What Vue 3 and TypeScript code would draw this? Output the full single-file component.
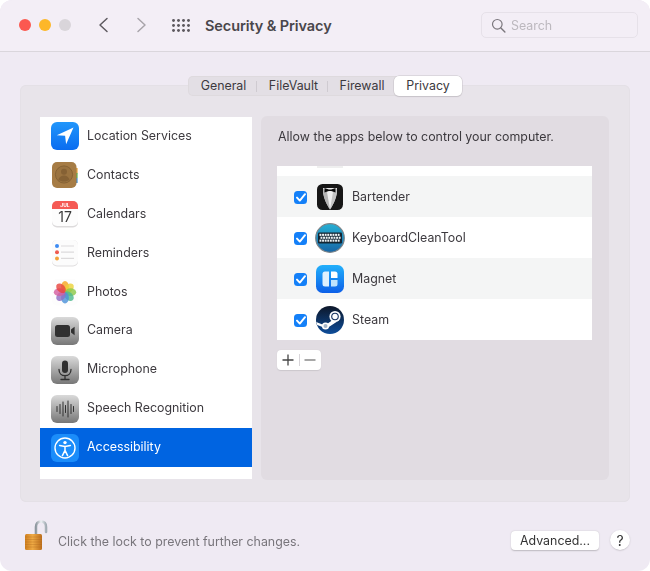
<script setup lang="ts">
interface Service { name: string; icon: string; selected?: boolean }
interface AppRow { name: string; icon: string }

const services: Service[] = [
  { name: 'Location Services', icon: 'location' },
  { name: 'Contacts', icon: 'contacts' },
  { name: 'Calendars', icon: 'calendars' },
  { name: 'Reminders', icon: 'reminders' },
  { name: 'Photos', icon: 'photos' },
  { name: 'Camera', icon: 'camera' },
  { name: 'Microphone', icon: 'microphone' },
  { name: 'Speech Recognition', icon: 'speech' },
  { name: 'Accessibility', icon: 'accessibility', selected: true }
]
const apps: AppRow[] = [
  { name: 'Bartender', icon: 'bartender' },
  { name: 'KeyboardCleanTool', icon: 'keyboard' },
  { name: 'Magnet', icon: 'magnet' },
  { name: 'Steam', icon: 'steam' }
]
const tabs = [
  { name: 'General', w: 69 },
  { name: 'FileVault', w: 71 },
  { name: 'Firewall', w: 66 },
  { name: 'Privacy', w: 68, active: true }
]
const petals = [
  { a: 0, c: '#f6a623' }, { a: 45, c: '#ecd23a' }, { a: 90, c: '#8cc84b' }, { a: 135, c: '#4fb98f' },
  { a: 180, c: '#4d93d9' }, { a: 225, c: '#8f6fc4' }, { a: 270, c: '#d45fa0' }, { a: 315, c: '#e8453f' }
]
const bars = [
  [6, 2.5], [9, 4.5], [12, 7], [14.5, 3.5], [17, 8], [20, 4.5], [22.5, 2.5]
]
const keyCols = [0, 1, 2, 3, 4, 5, 6, 7]
const keyRows = [0, 1, 2]
</script>

<template>
  <div class="window">
    <header class="titlebar">
      <div class="lights">
        <span class="light red"></span>
        <span class="light yellow"></span>
        <span class="light gray"></span>
      </div>
      <svg class="chev back" width="12" height="18" viewBox="0 0 12 18"><path d="M10 2.500 3 9l7 6.500" fill="none" stroke="#5e5a60" stroke-width="1.500" stroke-linecap="round" stroke-linejoin="round"/></svg>
      <svg class="chev forward" width="12" height="18" viewBox="0 0 12 18"><path d="M3 2.500 10 9l-7 6.500" fill="none" stroke="#a8a4aa" stroke-width="1.500" stroke-linecap="round" stroke-linejoin="round"/></svg>
      <svg class="grid-icon" width="18" height="13" viewBox="0 0 18 13">
        <g fill="#5c585e">
          <template v-for="y in [1.5, 6.5, 11.5]" :key="y">
            <circle v-for="x in [1.5, 6.5, 11.5, 16.5]" :key="x" :cx="x" :cy="y" r="1.45"/>
          </template>
        </g>
      </svg>
      <h1 class="title">Security &amp; Privacy</h1>
      <div class="search">
        <svg width="15" height="15" viewBox="0 0 15 15"><circle cx="6.300" cy="6.300" r="4.800" fill="none" stroke="#7b777d" stroke-width="1.200"/><path d="m9.900 9.900 4 4" stroke="#7b777d" stroke-width="1.400" stroke-linecap="round"/></svg>
        <span>Search</span>
      </div>
    </header>

    <main class="content">
      <nav class="tabs">
        <div v-for="(t, i) in tabs" :key="t.name" class="tab" :class="{ active: t.active, sep: i < 2 }" :style="{ width: t.w + 'px' }">{{ t.name }}</div>
      </nav>
      <section class="panel">
        <ul class="services">
          <li v-for="s in services" :key="s.name" class="service" :class="{ selected: s.selected }">
            <svg class="icon" width="28" height="28" viewBox="0 0 28 28">
              <template v-if="s.icon === 'location'">
                <defs><linearGradient id="loc" x1="0" y1="0" x2="0" y2="1"><stop offset="0" stop-color="#2196fb"/><stop offset="1" stop-color="#0a6cf0"/></linearGradient></defs>
                <rect width="28" height="28" rx="6" fill="url(#loc)"/>
                <path d="M22.500 5.500 5.800 13.200l8.300.6 1 8.400z" fill="#fff"/>
              </template>
              <template v-else-if="s.icon === 'contacts'">
                <rect x="22" y="7" width="4.600" height="5.500" fill="#e8a33c"/><rect x="22" y="12" width="4.600" height="5" fill="#5cb04e"/><rect x="22" y="17" width="4.600" height="5" fill="#3f8dd3"/>
                <rect x="1" y="1" width="24.500" height="26" rx="5" fill="#a67c45"/>
                <circle cx="13" cy="13.500" r="8.600" fill="#9a7340" stroke="#7f5d31" stroke-width=".8"/>
                <circle cx="13" cy="10.800" r="3" fill="#7f5d31" opacity=".8"/>
                <path d="M7.400 18.800c1.200-3.200 3.200-4.200 5.600-4.200s4.400 1 5.600 4.200c-3.200 2.400-8 2.400-11.200 0z" fill="#7f5d31" opacity=".8"/>
              </template>
              <template v-else-if="s.icon === 'calendars'">
                <rect x="1" y="1" width="26" height="26.500" rx="5" fill="#dddbdc"/>
                <path d="M1 9h26v12a5 5 0 0 1-5 5H6a5 5 0 0 1-5-5z" fill="#fdfdfd"/>
                <path d="M1 9V6a5 5 0 0 1 5-5h16a5 5 0 0 1 5 5v3z" fill="#f55a55"/>
                <text x="14" y="7.200" class="cal-m">JUL</text>
                <text x="14" y="22.400" class="cal-d">17</text>
              </template>
              <template v-else-if="s.icon === 'reminders'">
                <rect x="1" y="1" width="26" height="26.500" rx="5" fill="#dfddde"/>
                <rect x="1" y="1" width="26" height="25.500" rx="5" fill="#fcfcfc"/>
                <circle cx="6" cy="7" r="2" fill="#3d8bf2"/><circle cx="6" cy="13.200" r="2" fill="#ef5a50"/><circle cx="6" cy="19.400" r="2" fill="#f2a33a"/>
                <path d="M10 7h13M10 13.200h13M10 19.400h13" stroke="#dcdadb" stroke-width="1.200"/>
              </template>
              <template v-else-if="s.icon === 'photos'">
                <rect x="1" y="1" width="26" height="26.500" rx="5" fill="#fdfdfd"/>
                <ellipse v-for="p in petals" :key="p.a" cx="14" cy="8.600" rx="3.900" ry="5.600" :fill="p.c" opacity=".82" :transform="`rotate(${p.a} 14 14.200)`"/>
              </template>
              <template v-else-if="s.icon === 'camera'">
                <defs><linearGradient id="gr1" x1="0" y1="0" x2="0" y2="1"><stop offset="0" stop-color="#dadada"/><stop offset="1" stop-color="#777"/></linearGradient></defs>
                <rect width="28" height="28" rx="6" fill="url(#gr1)"/>
                <rect x="4" y="8" width="15" height="12" rx="2.500" fill="#303030"/>
                <path d="m20 12.600 3.600-2.800v8.400L20 15.400z" fill="#303030"/>
              </template>
              <template v-else-if="s.icon === 'microphone'">
                <defs><linearGradient id="gr2" x1="0" y1="0" x2="0" y2="1"><stop offset="0" stop-color="#dadada"/><stop offset="1" stop-color="#777"/></linearGradient></defs>
                <rect width="28" height="28" rx="6" fill="url(#gr2)"/>
                <rect x="11" y="4.500" width="6" height="12.500" rx="3" fill="#303030"/>
                <path d="M8 13.500c0 3.800 2.600 6.200 6 6.200s6-2.400 6-6.200M14 19.700v3.600M10 23.500h8" fill="none" stroke="#303030" stroke-width="1.300" stroke-linecap="round"/>
              </template>
              <template v-else-if="s.icon === 'speech'">
                <defs><linearGradient id="gr3" x1="0" y1="0" x2="0" y2="1"><stop offset="0" stop-color="#dadada"/><stop offset="1" stop-color="#777"/></linearGradient></defs>
                <rect width="28" height="28" rx="6" fill="url(#gr3)"/>
                <path v-for="b in bars" :key="b[0]" :d="`M${b[0]} ${14 - b[1]}v${b[1] * 2}`" stroke="#303030" stroke-width="1" stroke-linecap="round"/>
              </template>
              <template v-else>
                <rect width="28" height="28" rx="6" fill="#1b8dfa"/>
                <circle cx="14" cy="14" r="10" fill="none" stroke="#fff" stroke-width="1.400"/>
                <circle cx="14" cy="8.600" r="1.700" fill="#fff"/>
                <path d="M8.600 11.400 14 12.400l5.400-1M14 12.400v4.200M14 16.400l-2.600 5.200M14 16.400l2.600 5.200" fill="none" stroke="#fff" stroke-width="1.500" stroke-linecap="round" stroke-linejoin="round"/>
              </template>
            </svg>
            <span class="service-name">{{ s.name }}</span>
          </li>
        </ul>

        <div class="pane">
          <p class="pane-text">Allow the apps below to control your computer.</p>
          <div class="table">
            <div class="peek"></div>
            <div v-for="a in apps" :key="a.name" class="app">
              <span class="check">
                <svg width="10" height="9" viewBox="0 0 10 9"><path d="M1 4.600 3.800 7.600 9 1.200" fill="none" stroke="#fff" stroke-width="1.900" stroke-linecap="round" stroke-linejoin="round"/></svg>
              </span>
              <svg class="app-icon" width="30" height="30" viewBox="0 0 30 30">
                <template v-if="a.icon === 'bartender'">
                  <rect x="2" y="2" width="26" height="26" rx="5.500" fill="#161616"/>
                  <path d="M8 6h14c.5 8-3 15-7 21.500C11 21 7.500 14 8 6z" fill="#efefef"/>
                  <path d="M8 6c-.5 8 3 15.500 7 21.500L12 10z" fill="#b4b4b4"/>
                  <path d="M22 6c.5 8-3 15.500-7 21.500L18 10z" fill="#c4c4c4"/>
                  <path d="M9.500 6 13.800 7.600h2.400L20.500 6v4.400L16.200 9h-2.400L9.500 10.400z" fill="#0a0a0a"/>
                </template>
                <template v-else-if="a.icon === 'keyboard'">
                  <defs>
                    <linearGradient id="kb" x1="0" y1="0" x2="0" y2="1"><stop offset="0" stop-color="#27b0d4"/><stop offset="1" stop-color="#1666a6"/></linearGradient>
                  </defs>
                  <circle cx="15" cy="15" r="14.300" fill="url(#kb)" stroke="#7c8388" stroke-width="1.200"/>
                  <rect x="3" y="9.500" width="24" height="11" rx="1.200" fill="#142633"/>
                  <template v-for="r in keyRows" :key="r">
                    <rect v-for="c in keyCols" :key="c" :x="4.500 + c * 2.600 + (r % 2)" :y="10.800 + r * 2.900" width="1.900" height="2.100" fill="#eef3f5"/>
                  </template>
                </template>
                <template v-else-if="a.icon === 'magnet'">
                  <defs><linearGradient id="mg" x1="0" y1="0" x2="0" y2="1"><stop offset="0" stop-color="#22b0fb"/><stop offset="1" stop-color="#0d5fe8"/></linearGradient></defs>
                  <rect x="1" y="1" width="28" height="28" rx="6.500" fill="url(#mg)"/>
                  <path d="M7.500 10a2.500 2.500 0 0 1 2.500-2.500h4V22.500h-4A2.500 2.500 0 0 1 7.500 20z" fill="#dff1fe"/>
                  <path d="M16 7.500h4a2.500 2.500 0 0 1 2.500 2.500v4H16z" fill="#fff"/>
                  <path d="M16 16h6.500v4a2.500 2.500 0 0 1-2.500 2.500h-4z" fill="#bfe3fd"/>
                </template>
                <template v-else>
                  <defs><linearGradient id="st" x1="0" y1="0" x2="0" y2="1"><stop offset="0" stop-color="#0d1729"/><stop offset="1" stop-color="#0e4d9a"/></linearGradient></defs>
                  <circle cx="15" cy="15" r="14" fill="url(#st)"/>
                  <path d="M1.200 17 10 20.500 19 14l2.500 3-10 6.500L2.200 20z" fill="#fff"/>
                  <circle cx="20" cy="11.500" r="5.600" fill="#fff"/>
                  <circle cx="20" cy="11.500" r="3.800" fill="#14305e"/>
                  <circle cx="20" cy="11.500" r="2.700" fill="#fff"/>
                  <circle cx="10.500" cy="21" r="3.600" fill="#fff"/>
                  <circle cx="10.500" cy="21" r="2" fill="#a6b6c8"/>
                </template>
              </svg>
              <span class="app-name">{{ a.name }}</span>
            </div>
          </div>
          <div class="plusminus">
            <span class="pm">
              <svg width="12" height="12" viewBox="0 0 12 12"><path d="M6 .5v11M.5 6h11" stroke="#444" stroke-width="1.300"/></svg>
            </span>
            <span class="pm-sep"></span>
            <span class="pm">
              <svg width="12" height="12" viewBox="0 0 12 12"><path d="M.5 6h11" stroke="#777" stroke-width="1.300"/></svg>
            </span>
          </div>
        </div>
      </section>
    </main>

    <footer class="footer">
      <svg class="lock" width="26" height="32" viewBox="0 0 26 32">
        <defs>
          <linearGradient id="shack" x1="0" y1="0" x2="1" y2="0"><stop offset="0" stop-color="#8d979e"/><stop offset=".5" stop-color="#eef2f4"/><stop offset="1" stop-color="#a2acb3"/></linearGradient>
          <linearGradient id="brass" x1="0" y1="0" x2="1" y2="0"><stop offset="0" stop-color="#cf7f1f"/><stop offset=".45" stop-color="#eeaa45"/><stop offset="1" stop-color="#bd6f1c"/></linearGradient>
        </defs>
        <path d="M12 15V7c0-3.500 2-5.500 5-5.500s5 2 5 5.500v5" fill="none" stroke="url(#shack)" stroke-width="2.600" stroke-linecap="round"/>
        <rect x="1" y="14" width="17" height="16" rx="1.500" fill="url(#brass)"/>
        <path d="M1 17h17M1 19.500h17M1 22h17M1 24.500h17M1 27h17" stroke="#a8621a" stroke-width=".5" opacity=".6"/>
      </svg>
      <span class="lock-text">Click the lock to prevent further changes.</span>
      <button class="advanced" type="button">Advanced...</button>
      <button class="help" type="button">?</button>
    </footer>
  </div>
</template>

<style>
html, body { margin: 0; background: #fff; }
</style>

<style scoped>
.window {
  width: 650px;
  height: 571px;
  box-sizing: border-box;
  background: #efeaf3;
  border-radius: 12px;
  overflow: hidden;
  display: flex;
  flex-direction: column;
  font-family: Inter, "Liberation Sans", sans-serif;
  color: #3c393e;
  font-size: 12.400px;
  filter: blur(0.3px);
}
.titlebar {
  height: 52px;
  box-sizing: border-box;
  flex: none;
  display: flex;
  align-items: center;
  background: #f3eef6;
  border-bottom: 1px solid #dad6dc;
  padding: 0 12px 1px 19px;
}
.lights { display: flex; gap: 7.800px; width: 78px; }
.light { width: 12px; height: 12px; border-radius: 50%; }
.red { background: #fb5850; }
.yellow { background: #fdb728; }
.gray { background: #d9d5da; }
.chev.forward { margin-left: 26px; }
.grid-icon { margin-left: 25px; }
.title {
  margin: 0 0 0 15px;
  font-size: 14.500px;
  font-weight: 600;
  color: #49464b;
  letter-spacing: -0.1px;
}
.search {
  margin-left: auto;
  width: 157px;
  height: 26px;
  box-sizing: border-box;
  border: 1px solid #e6e1e9;
  border-radius: 5px;
  display: flex;
  align-items: center;
  gap: 5px;
  padding-left: 9px;
  color: #bcb8be;
}
.content {
  flex: none;
  padding: 24px 20px 0;
  display: flex;
  flex-direction: column;
  align-items: center;
}
.tabs {
  display: flex;
  height: 20px;
  background: #e3dfe5;
  border-radius: 5px;
  position: relative;
  z-index: 1;
  box-shadow: inset 0 0 0 1px #dedade;
}
.tab {
  display: flex;
  align-items: center;
  justify-content: center;
  position: relative;
  box-sizing: border-box;
  padding: 0 0 1px 2px;
  color: #3c393e;
}
.tab.sep::after {
  content: "";
  position: absolute;
  right: 0;
  top: 5px;
  height: 11px;
  width: 1px;
  background: #cfcbd1;
}
.tab.active {
  background: #fff;
  border-radius: 5px;
  padding-left: 0;
  box-shadow: 0 0 0 .5px #c8c4ca, 0 1px 1px #c8c4ca;
}
.panel {
  margin-top: -11px;
  width: 610px;
  height: 417px;
  box-sizing: border-box;
  background: #e8e4ea;
  border-radius: 6px;
  box-shadow: inset 0 0 0 1px #e4e0e6;
  padding: 31px 21px 0 20px;
  display: flex;
  align-items: flex-start;
  gap: 9px;
}
.services {
  list-style: none;
  margin: 1px 0 0;
  padding: 0;
  width: 212px;
  height: 362px;
  flex: none;
  background: #fff;
}
.service {
  height: 38.900px;
  display: flex;
  align-items: center;
  padding-left: 11px;
  gap: 8px;
}
.service.selected {
  background: #0064e1;
  color: #fff;
}
.service-name { white-space: nowrap; margin-top: -2px; }
.icon { flex: none; }
.cal-m { font-size: 5px; font-weight: 700; fill: #fff; text-anchor: middle; font-family: Inter, sans-serif; }
.cal-d { font-size: 14px; fill: #3a3a3a; text-anchor: middle; font-family: Inter, sans-serif; }
.pane {
  flex: none;
  width: 348px;
  height: 364px;
  box-sizing: border-box;
  background: #e1dce2;
  border-radius: 6px;
  padding: 13px 17px 0 17px;
}
.pane-text { margin: 0; line-height: 16px; height: 37px; }
.table {
  background: #fff;
  height: 174px;
  box-sizing: border-box;
  padding-top: 10px;
  margin-left: -1px;
  position: relative;
}
.peek {
  position: absolute;
  top: 0;
  left: 40px;
  width: 26px;
  height: 2px;
  background: #efefef;
}
.app {
  height: 41px;
  display: flex;
  align-items: center;
  padding-left: 17px;
}
.app:nth-of-type(even) { background: #f4f5f5; }
.check {
  width: 13px;
  height: 13px;
  border-radius: 3.500px;
  background: #1480f8;
  display: flex;
  align-items: center;
  justify-content: center;
  flex: none;
  margin-top: 2px;
}
.app-icon { margin-left: 8px; flex: none; }
.app-name { margin-left: 7px; }
.plusminus {
  margin-top: 10px;
  margin-left: -1px;
  width: 44px;
  height: 20px;
  background: #fff;
  border-radius: 4px;
  box-shadow: 0 .5px 1px #cbc7cd;
  display: flex;
  align-items: center;
}
.pm { flex: 1; display: flex; align-items: center; justify-content: center; }
.pm-sep { width: 1px; height: 12px; background: #d8d5d9; }
.footer {
  flex: 1;
  display: flex;
  align-items: center;
  padding: 0 20px 2px 24px;
}
.lock { flex: none; }
.lock-text { margin-left: 8px; color: #78757b; margin-top: 11px; }
button { font: inherit; color: #333; border: 0; background: #fff; padding: 0; box-shadow: 0 .5px 1.500px #bdb9bf; }
.advanced {
  margin-left: auto;
  width: 88px;
  height: 19px;
  border-radius: 4px;
  margin-top: 10px;
}
.help {
  margin-left: 11px;
  width: 20px;
  height: 20px;
  border-radius: 50%;
  font-size: 14px;
  margin-top: 9px;
}
</style>
